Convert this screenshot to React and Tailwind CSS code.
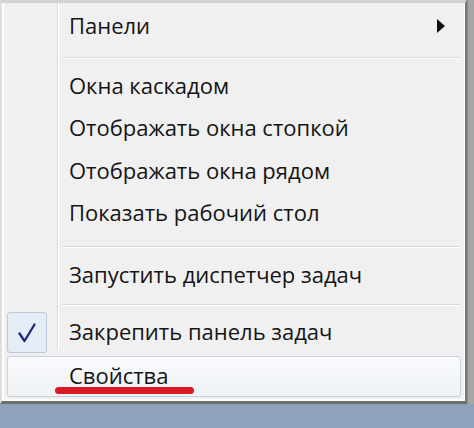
import React from "react";

function Sep({ h, top }) {
  return (
    <div className="flex" style={{ height: h }}>
      <div className="w-[55px] shrink-0" />
      <div className="flex-1 flex flex-col pr-[4px]" style={{ paddingTop: top }}>
        <div className="h-px bg-[#d9d9d9] ml-[3px]" />
        <div className="h-px bg-white ml-[3px]" />
      </div>
    </div>
  );
}

function Item({ h, children, right }) {
  return (
    <div className="flex items-center" style={{ height: h }}>
      <div className="w-[55px] shrink-0 self-stretch" />
      <div className="flex-1 flex items-center pl-[10px] pr-[20px] pb-[2px]">
        <span className="flex-1">{children}</span>
        {right}
      </div>
    </div>
  );
}

export default function App() {
  return (
    <div
      className="w-[474px] h-[428px] bg-[#8ea2bc] relative overflow-hidden flex flex-col text-[#141414] text-[22px]"
      style={{ fontFamily: '"Open Sans", "Noto Sans", sans-serif' }}
    >
      <div className="flex h-[404px]">
        <div className="w-[467px] h-full border-t-[3px] border-t-[#d2d2d2] border-l-[2px] border-l-[#dedede] border-r-[2px] border-r-[#777777] border-b-[3px] border-b-[#6f6f6f]">
          <div className="h-full border-l-2 border-b-2 border-r border-white bg-[#f0f0f0] relative flex flex-col">
            <div className="absolute left-[53px] top-0 bottom-[50px] w-[3px] flex">
              <div className="w-px bg-[#dcdcdc]" />
              <div className="w-px bg-white" />
            </div>
            <Item h={47}
              right={
                <svg width="10" height="16" viewBox="0 0 10 16" className="mr-[-2px]">
                  <path d="M1 1 L9 8 L1 15 Z" fill="#111" />
                </svg>
              }
            >
              Панели
            </Item>
            <Sep h={15} top={7} />
            <Item h={42}>Окна каскадом</Item>
            <Item h={43}>Отображать окна стопкой</Item>
            <Item h={42}>Отображать окна рядом</Item>
            <Item h={42}>Показать рабочий стол</Item>
            <Sep h={20} top={12} />
            <Item h={42}>Запустить диспетчер задач</Item>
            <Sep h={16} top={8} />
            <div className="flex items-center h-[41px] relative">
              <div className="ml-[3px] w-[40px] h-[41px] rounded-[3px] border border-[#b9c9dc] bg-[#e4ecf6] flex items-center justify-center">
                <svg width="22" height="22" viewBox="0 0 22 22">
                  <path d="M3.5 11.5 L8.5 19 L18.5 2.5" fill="none" stroke="#1d2a7a" strokeWidth="2.3" strokeLinejoin="round" strokeLinecap="round" />
                </svg>
              </div>
              <div className="w-[12px]" />
              <span className="pl-[10px] pb-[2px]">Закрепить панель задач</span>
            </div>
            <div className="h-[3px]" />
            <div className="mx-[3px] h-[41px] rounded-[3px] border border-[#c6d1dd] bg-gradient-to-b from-[#f9fafc] to-[#eff2f6] flex items-center">
              <span className="pl-[61px] pb-[2px]">Свойства</span>
            </div>
            <div className="absolute left-[51px] top-[384px] w-[139px] h-[7px] rounded-full bg-[#d81b22]" />
          </div>
        </div>
        <div className="w-[7px] h-full bg-[#a6a6a6] border-l border-[#8c8c8c]" />
      </div>
    </div>
  );
}
